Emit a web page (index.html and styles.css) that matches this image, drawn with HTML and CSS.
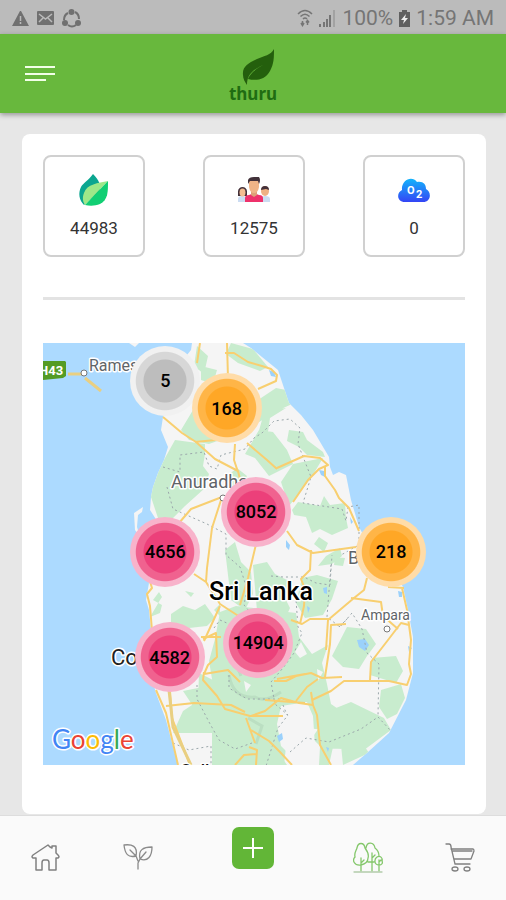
FILE: index.html
```html
<!DOCTYPE html>
<html lang="en">
<head>
    <meta charset="UTF-8">
    <meta name="viewport" content="width=device-width, initial-scale=1.0">
    <title>Thuru</title>
    <link rel="stylesheet" href="styles.css">
</head>
<body>
    <div class="status-bar">
        <div class="status-left">
            <svg width="17" height="16" viewBox="0 0 17 16"><path d="M8 1h1l8 15H0z" fill="#707070"/><path d="M8.500 6v5M8.500 12v2" stroke="#bbb" stroke-width="1.500"/></svg>
            <svg width="17" height="14" viewBox="0 0 17 14"><rect width="17" height="14" rx="1" fill="#707070"/><path d="M2 3l6.500 5L15 3M2 11l4-4M15 11l-4-4" fill="none" stroke="#bbb" stroke-width="1.500"/></svg>
            <svg width="20" height="19" viewBox="0 0 20 19" fill="none" stroke="#707070" stroke-width="2"><path d="M13 3q4 2 4 7M14 16q-4 3-8 0M2 11q0-5 4-7"/><g fill="#707070" stroke="none"><circle cx="9.500" cy="3" r="3"/><circle cx="3" cy="14" r="3"/><circle cx="16" cy="14" r="3"/></g></svg>
        </div>
        <div class="status-right">
            <svg width="16" height="18" viewBox="0 0 16 18" fill="none" stroke="#757575" stroke-width="1.500"><path d="M1 5q7-7 14 0M3.500 7.500q4.500-4.500 9 0M6 10q2-2 4 0"/><path d="M5.500 16v-4M10.500 12v4M4 14l1.500 2.500L7 14M9 13.500l1.500-2 1.500 2"/></svg>
            <svg width="17" height="17" viewBox="0 0 17 17" fill="#757575"><path d="M0 14h2v3H0zM4 12h2v5H4zM7 9h2v8H7zM10 5h2v12h-2z"/><path d="M14 0h2v17h-2z" fill="#a2a2a2"/></svg>
            <span class="battery-level">100%</span>
            <svg width="11" height="17" viewBox="0 0 11 17"><path d="M3 0h5v2h3v15H0V2h3z" fill="#606060"/><path d="M7 4 2 10h3l-1 4 5-6H6z" fill="#eee"/></svg>
            <span>1:59 AM</span>
        </div>
    </div>

    <header class="header">
        <button class="menu" aria-label="Menu">
            <svg width="32" height="18" viewBox="0 0 32 18"><path d="M1 2h30M1 9h30M1 15h21" stroke="#f2ffe8" stroke-width="2"/></svg>
        </button>
        <a href="#" class="logo">
            <svg width="36" height="38" viewBox="0 0 36 38"><path d="M34 1c-3 6-10 7-17 10C9 15 2 18 3 27c0 4 2 7 4 10 0-8 3-14 16-20C14 22 10 26 8 31c8 2 17 1 22-8 4-7 4-14 4-22z" fill="#245f0d"/></svg>
            <span>thuru</span>
        </a>
    </header>

    <main class="card">
        <div class="stats">
            <div class="stat">
                <svg width="32" height="34" viewBox="0 0 32 34"><path d="M15 1c6 6 9 12 6 18L6 32C1 27 0 20 3 14c2-4 8-7 12-13z" fill="#0ba690"/><path d="M30 8C20 10 9 11 6 20c-2 5-1 9 1 12z" fill="#9de889"/><path d="M30 8c0 11 0 19-8 23-5 2-10 2-15 1z" fill="#11cf73"/></svg>
                <span>44983</span>
            </div>
            <div class="stat">
                <svg width="34" height="34" viewBox="0 0 34 34">
                    <path d="M1 29v-3q0-3 4-3t5 3v3z" fill="#cbdcf2"/>
                    <path d="M1 23v-5q1-4 4.500-4t4.500 4v5z" fill="#44313a"/>
                    <ellipse cx="5.500" cy="19.500" rx="3" ry="4" fill="#f3bd91"/>
                    <path d="M24 29v-4q1-2 4-2 5 0 5 3v3z" fill="#cbdcf2"/>
                    <ellipse cx="28" cy="18" rx="4" ry="5" fill="#efb184"/>
                    <path d="M24 17q0-4 4-4t4 4l-3-1z" fill="#44313a"/>
                    <path d="M8 29v-4q0-3 4-3l5-2 5 2q4 0 4 3v4z" fill="#ee316b"/>
                    <path d="M14 18h6v4l-3 2-3-2z" fill="#dda078"/>
                    <path d="M12 10q0-5 5-5t5 5v4q-1 6-5 6t-5-6z" fill="#f0b487"/>
                    <path d="M11 11V7q1-3 6-3h5q2 3 0 7l-1-3h-8z" fill="#42313a"/>
                </svg>
                <span>12575</span>
            </div>
            <div class="stat">
                <svg width="34" height="34" viewBox="0 0 34 34">
                    <defs><linearGradient id="cloud" x1="0" y1="0" x2="0" y2="1"><stop offset="0" stop-color="#14b4fb"/><stop offset="1" stop-color="#3445f5"/></linearGradient></defs>
                    <path d="M8 29c-8 0-9-9-3-12C4 7 15 2 20 9c6-1 9 2 9 7 6 3 5 13-3 13z" fill="url(#cloud)"/>
                    <text x="10" y="21" class="oxygen">O</text><text x="19" y="25" class="oxygen">2</text>
                </svg>
                <span>0</span>
            </div>
        </div>

        <hr>

        <div class="map">
            <svg class="map-canvas" viewBox="42 343 422 422">
                <defs>
                    <path id="land" d="M191 343 190 350 182 360 172 388 162 417 160 430 167 447 163 460 157 473 152 487 150 497 149 510 158 524 145 545 143 562 148 583 145 600 148 610 150 630 144 645 150 675 155 693 165 720 173 750 177 765H352L367 752 388 733 405 700 412 673 412 637 407 610 402 587 392 570 365 540 358 527 350 500 345 475 338 472 332 475 329 467 328 457 312 430 300 415 288 403 277 370 250 348 242 343z"/>
                    <clipPath id="coast"><use href="#land"/></clipPath>
                </defs>
                <use href="#land" fill="#f5f5f5"/>
                <path class="shore" d="M128 343l6 4 4-4zM133 513l9-6-1 5-4 3-1 12 3 10-5-7z"/>
                <g clip-path="url(#coast)">
                    <path class="forest" d="M174 440l30 4v10l-2 12 6 8-4 14-20 18-14 14-13-2-8-24 10-27z"/>
                    <path class="forest" d="M180 430l12-20 12-4 16 12 16 16-28 10-20-4zM196 346l11 10-4 18-10-8zM200 366l16 4-4 14-12-4z"/>
                    <path class="forest" d="M230 343l22 6 15 18-8 4-22-8-12-9zM257 400l18-12 10 2 6 14-13 6-20 12zM261 420l10-10 14-2-16 10-2 14-10 2zM258 430l14 2 14 18 6 14-24 12-14-18-10-4zM288 430l14 2 4 8 16 12 2 5-18-2-8-8-12-6z"/>
                    <path class="forest" d="M292 464l30-6-12 20-22 28-8-24zM291 510l6-8 22 4 4-10 6 9 15-2 1 15 2 10-16 7-12-6-8 4-6-16-12-2zM318 537l9 6-4 9-10-8zM221 480l15-12 10 8-8 16zM224 550l10-8 6 20 10 10 2 22-8 16-14-10z"/>
                    <path class="forest" d="M152 600l6-8 3 5-2 3-7 12-3 5 10-4 2-8zM170 614l12-8 12 4 10-6 10 14-8 8-18 2-18-5zM184 591l9 2-3 4zM213 610l6-6v12z"/>
                    <path class="forest" d="M219 612l16-6 60 7 3 24 13 17 16-9-6 18 5 21 4 20 16 11-14 16-26-3-11 4-10 15-2 18-10 22-62 5V706l-17 3-12-18 30-6-4-24 6-22z"/>
                    <path class="forest" d="M198 673l16 8v-25l20-16 56 46-14 18 4 28-4 18 10 15h-71v-32h-43l10-22 15-10z"/>
                    <path class="forest" d="M301 578l15-3 21 6-6 18-9 16-18 3-9-15zM252 565l14-3 8 12 16 8-8 12 7 14-5 11-28-8z"/>
                    <path class="forest" d="M317 566l8-10 14-8 2 8-10 8zM334 557l10 1-2 8-9-1zM346 627l19 2 10 15-9 12-8 13-16-2-11-11zM371 658l24-2 7 15-7 12-26-8zM380 690l20-6 4 14-8 16-10 5-8-12zM330 710l20-8 33 16 7 12-27 20-42-2-10-10zM320 728l14 10-6 27h-10zM340 745l20-4 8 12-26 12z"/>
                    <path class="bare" d="M280 706l26-4 6 14 2 30-18 16-16-16-4-22zM243 681l7 4-5 7zM316 669l6 3-5 9zM300 642l6 12-7 4-5-6z"/>
                    <path class="relief" d="M228 675q4 24 26 22 10 6 26-5M247 718l14 8-6 18M232 656l8 20"/>
                    <path class="water" d="M356 640l8-1 4 6-4 6-6-4zM276 736l5-3 1 6-4 3zM322 588l4-1v7l-3-1zM268 370l5 2 2 5-5-1zM318 470l5 1 1 6-4-2zM285 540l4 5-1 5-3-3zM306 606l3 2-2 5zM349 517l3 5-2 2zM397 591l4 1v5h-3zM407 646l4 2-3 4zM325 747l3 1-1 4z"/>
                </g>
                <path class="border" d="M162 467l17 5v-17l24-3 5 14 8 3 4-14 24-6 9-11 8-5 12-12 16-2 10 9-2 16 13 33-8 26 39 6 4 12 2-14 11-2v40l-18 10"/>
                <path class="border" d="M166 487l6 22 34 15 19 10v21l14 12 7 22-3 16 18 21M270 576l12 1 21 0 12 6 14 2 2-30M294 586l3 41 4 6-8 20-11 15-12 14 4 22 13 11-10 13-12 38M196 685v14l12 23 10 18 16 9 17-6M228 670v18l18 11h38M289 752l16-14 23 4 32-13 17-12 13 14"/>
                <path class="border" d="M330 565l-4 52 13 10 12-14 10 16 5 24 12 11-1 52M172 743l16 7 22-4v19M213 628l6-8 18 8M282 705l4 10M338 627l10-10"/>
                <path class="road" d="M199 343l-3 20M226 343l1 35M224 353h9l14 9 14 4 9 3 6 6-1 6-18 8M162 417l19 16 14 9 19 17 23 12 4 16M234 444l-1 16 4 12M194 442l31-3M246 443l20 17 10 9M276 468l27-12 16 2 8 7-9 4-11 11-15 22M324 466v10l10 14 4 8 10 10 10 23"/>
                <path class="road" d="M221 497l-31 12-12 14M220 500l-9 28-5 40-1 14-12-8M205 582l14 22 20 13M219 606l-16 35M256 520v20l-9 38-8 27M286 531l10 14 16 8 43-6M310 550l-1 20-9 9 4 10-1 17-4 18M403 588l-16-1M366 578l-3 12-10 8-26 22-2 30M350 598l30 4 2 14 15 13M401 588l5 22 4 30-2 24 2 10-4 11-18-4h-45l-13 10-19 9"/>
                <path class="road" d="M147 575l4 13-5 6 3 12 2 25M155 690l10 23 12 52M200 637h20M202 639l13-6 1 24-9 8-4 9 24-4 12 12M203 672l-1 8 14 16 8 13 25 7h33M165 706l28-3 37 2 14 7M169 691l2 27 18 47M273 681h12l10-5 15-3 11 5 20-1M324 677l5-33 1-19 15-1M295 701l11-14 11-8M276 679l28-5M310 692l2 13-14-2-18-5-16 13-14 5M312 705l4 10 3 30 11 20M250 730l18 11 11 11 12 13M245 718l9 25M290 620l11 4 8-5h20M369 680l1-18 17-22 13-17 8 2M264 700l40 3M248 747l8 3-1 15M234 765l9-10 12-1"/>
                <path class="highway" d="M67 374h16M84 378l16 13M168 690l4 37 18 38"/>
                <path d="M42 361h22l1 1v14l-3 2-20 2z" fill="#549b25"/>
                <text x="38" y="375" class="route">H43</text>
                <g class="town"><circle cx="83" cy="373" r="3"/><circle cx="386" cy="629" r="3"/><circle cx="222" cy="498" r="3"/></g>
                <text x="88" y="371" class="place">Rames</text>
                <text x="170" y="488" class="place city">Anuradha</text>
                <text x="110" y="665" class="place capital">Co</text>
                <text x="347" y="564" class="place city">B</text>
                <text x="360" y="620" class="place small">Ampara</text>
                <text x="208" y="600" class="place country">Sri Lanka</text>
                <text x="179" y="776" class="place south">Galle</text>
                <text x="51" y="749" class="google"><tspan fill="#4285f4">G</tspan><tspan fill="#ea4335">o</tspan><tspan fill="#fbbc05">o</tspan><tspan fill="#4285f4">g</tspan><tspan fill="#34a853">l</tspan><tspan fill="#ea4335">e</tspan></text>
            </svg>
            <button class="cluster grey jaffna">5</button>
            <button class="cluster orange kilinochchi">168</button>
            <button class="cluster pink anuradhapura">8052</button>
            <button class="cluster pink puttalam">4656</button>
            <button class="cluster orange batticaloa">218</button>
            <button class="cluster pink kandy">14904</button>
            <button class="cluster pink colombo">4582</button>
        </div>
    </main>

    <nav class="bottom-nav">
        <a href="#" aria-label="Home">
            <svg width="30" height="30" viewBox="0 0 30 30" fill="none" stroke="#808080" stroke-width="1.500" stroke-linejoin="round"><path d="M5 15v12h6v-7q0-3 2-3h3q2 0 2 3v7h7V15h2q2-1 0-3l-2-2V3h-4v2l-2-1-2-2L2 12q-2 2 0 3z"/></svg>
        </a>
        <a href="#" aria-label="Plants">
            <svg width="30" height="30" viewBox="0 0 30 30" fill="none" stroke="#8b8b8b" stroke-width="1.300" stroke-linecap="round" stroke-linejoin="round"><path d="M1 2c8-1 14 1 12 11C5 15 2 11 1 2zM17 16C15 7 20 4 29 4c0 9-4 15-12 12zM7 7l6 6 2 5M23 9l-6 7-2 4v6"/></svg>
        </a>
        <a href="#" class="add" aria-label="Add">
            <svg width="22" height="22" viewBox="0 0 22 22"><path d="M11 1v20M1 11h20" stroke="#fff" stroke-width="2"/></svg>
        </a>
        <a href="#" aria-label="Forest">
            <svg width="30" height="32" viewBox="0 0 30 32" fill="none" stroke="#84c76b" stroke-width="1.300" stroke-linecap="round"><path d="M8 29V16M8 21l3-3M8 23C1 24-1 18 2 15 1 11 3 9 4 6c1-6 7-6 8 0 3 4 4 7 3 10 0 4-3 6-7 7M19 29V11M19 16l3-3M15 20h6M13 6c1-7 8-6 9 0 4 3 4 6 4 8M26 29V18M26 23c-5 0-5-6-2-8 3-2 6 1 5 4 1 2 0 4-3 4M26 20l2-2"/><path d="M1 30h28" stroke="#b2ccaa"/></svg>
        </a>
        <a href="#" aria-label="Cart">
            <svg width="30" height="30" viewBox="0 0 30 30" fill="none" stroke="#808080" stroke-width="1.300" stroke-linecap="round" stroke-linejoin="round"><path d="M1 1h3q2 0 2 3l4 17h15M6 6h22q1 0 1 2l-3 8H9M8 8h19"/><ellipse cx="10" cy="26" rx="3" ry="2"/><ellipse cx="22" cy="26" rx="3" ry="2"/></svg>
        </a>
    </nav>
</body>
</html>
```
FILE: styles.css
```css
* {
    box-sizing: border-box;
}
body {
    font-family: Roboto, "Liberation Sans", sans-serif;
    display: flex;
    flex-direction: column;
    min-height: 100vh;
    margin: 0;
    background: #e7e7e7;
}
svg {
    display: block;
}
.status-bar {
    display: flex;
    justify-content: space-between;
    align-items: center;
    height: 34px;
    padding: 2px 12px 0;
    background: #bbb;
    color: #757575;
    font-size: 21px;
}
.status-left, .status-right {
    display: flex;
    align-items: center;
    gap: 8px;
}
.status-right {
    gap: 6px;
}
.header {
    display: grid;
    grid-template-columns: 1fr auto 1fr;
    align-items: center;
    height: 79px;
    padding: 0 24px;
    background: #68b83d;
    box-shadow: 0 2px 5px rgba(0, 0, 0, 0.35);
}
.menu {
    justify-self: start;
    padding: 0;
    border: 0;
    background: none;
}
.logo {
    display: flex;
    flex-direction: column;
    align-items: center;
    padding-top: 2px;
    color: #206c12;
    font-family: "Noto Sans", sans-serif;
    font-size: 17px;
    font-weight: bold;
    line-height: 16px;
    text-decoration: none;
}
.logo svg {
    margin-left: 10px;
}
.card {
    flex: 1;
    margin: 21px 20px 1px 22px;
    padding: 21px;
    border-radius: 8px;
    background: #fff;
}
.stats {
    display: flex;
    justify-content: space-between;
}
.stat {
    display: flex;
    flex-direction: column;
    align-items: center;
    gap: 11px;
    width: 102px;
    height: 102px;
    padding-top: 16px;
    border: 2px solid #d0d0d0;
    border-radius: 8px;
    color: #333;
    font-size: 17px;
}
.oxygen {
    fill: #fff;
    font-size: 11px;
    font-weight: bold;
}
hr {
    height: 3px;
    margin: 40px 0 43px;
    border: 0;
    background: #e3e3e3;
}
.map {
    position: relative;
    aspect-ratio: 1;
    overflow: hidden;
    background: #acdaff;
}
.map-canvas {
    width: 100%;
    height: 100%;
}
.shore, .bare {
    fill: #f5f5f5;
}
.forest {
    fill: #c8ecce;
}
.water {
    fill: #9bd1fb;
}
.relief {
    fill: none;
    stroke: #bbdfc2;
    stroke-width: 3;
}
.border {
    fill: none;
    stroke: #9ba7ab;
    stroke-width: 1;
    stroke-dasharray: 2 3;
}
.road, .highway {
    fill: none;
    stroke: #f8cf70;
    stroke-width: 2;
    stroke-linejoin: round;
}
.highway {
    stroke: #e9cf82;
    stroke-width: 3;
}
.town circle {
    fill: #fff;
    stroke: #777;
    stroke-width: 1;
}
.route {
    fill: #fff;
    font-size: 13px;
    font-weight: bold;
}
.place {
    fill: #5f6468;
    font-size: 16px;
    stroke: #fff;
    stroke-width: 3px;
    stroke-linejoin: round;
    paint-order: stroke;
}
.city {
    font-size: 18px;
}
.small {
    font-size: 14px;
}
.capital {
    fill: #222;
    font-size: 22px;
}
.country {
    fill: #000;
    font-size: 25px;
    font-weight: 500;
}
.south {
    fill: #111;
    font-size: 17px;
    font-weight: 500;
}
.google {
    font-family: Lato, sans-serif;
    font-size: 26px;
    stroke: #fff;
    stroke-width: 3px;
    stroke-linejoin: round;
    paint-order: stroke;
}
.cluster {
    position: absolute;
    width: 70px;
    height: 70px;
    padding: 0;
    border: 0;
    border-radius: 50%;
    color: #000;
    font-family: inherit;
    font-size: 18px;
    font-weight: 500;
    transform: translate(-50%, -50%);
}
.grey {
    background: radial-gradient(circle closest-side, #bdbdbd 60%, #d7d7d7 63%, #d7d7d7 82%, #f1f1f1 85%);
}
.orange {
    background: radial-gradient(circle closest-side, #ffa726 60%, #ffb547 63%, #ffb547 82%, #ffdca8 85%);
}
.pink {
    background: radial-gradient(circle closest-side, #ec407a 60%, #f0628f 63%, #f0628f 82%, #f8b3cb 85%);
}
.jaffna {
    left: 29%;
    top: 9%;
}
.kilinochchi {
    left: 43.5%;
    top: 15.5%;
}
.anuradhapura {
    left: 50.5%;
    top: 40%;
}
.puttalam {
    left: 29%;
    top: 49.5%;
}
.batticaloa {
    left: 82.5%;
    top: 49.5%;
}
.kandy {
    left: 51%;
    top: 71%;
}
.colombo {
    left: 30%;
    top: 74.5%;
}
.bottom-nav {
    display: grid;
    grid-template-columns: 2fr 2fr 3fr 2fr 2fr;
    justify-items: center;
    align-items: center;
    height: 85px;
    border-top: 1px solid #ddd;
    background: #fafafa;
}
.add {
    display: flex;
    justify-content: center;
    align-items: center;
    width: 42px;
    height: 42px;
    margin-bottom: 20px;
    border-radius: 7px;
    background: #62b637;
}
```
